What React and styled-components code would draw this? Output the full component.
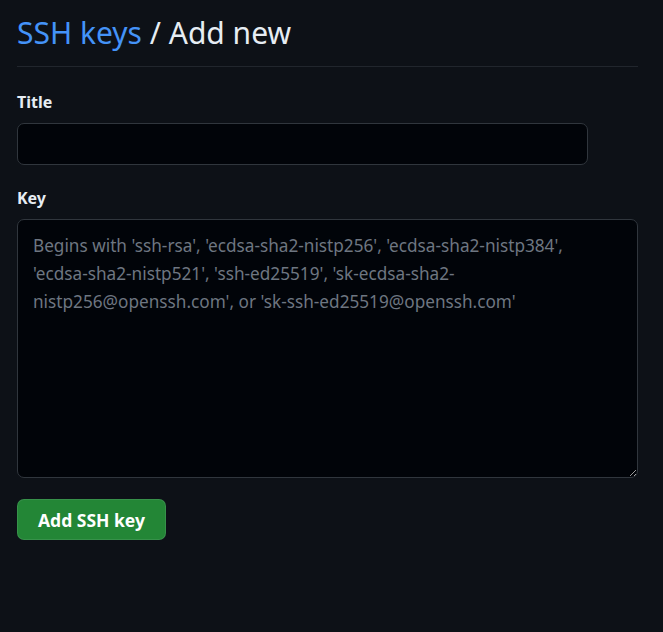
import styled, { createGlobalStyle } from "styled-components";

const GlobalStyle = createGlobalStyle`
  html, body {
    margin: 0;
    padding: 0;
    background-color: #0d1117;
    color-scheme: dark;
  }
  body {
    font-family: "Noto Sans", "Open Sans", sans-serif;
    color: #e6edf3;
  }
`;

const Page = styled.main`
  display: flex;
  flex-direction: column;
  width: 621px;
  padding: 12px 25px 40px 17px;
`;

const Subhead = styled.div`
  display: flex;
  align-items: center;
  padding-bottom: 12px;
  border-bottom: 1px solid #21262d;
  margin-bottom: 24px;
`;

const Heading = styled.h1`
  margin: 0;
  font-size: 30px;
  font-weight: 400;
  line-height: 42px;
  color: #e6edf3;
`;

const Crumb = styled.a`
  color: #4493f8;
  text-decoration: none;
`;

const Form = styled.form`
  display: flex;
  flex-direction: column;
`;

const Field = styled.div`
  display: flex;
  flex-direction: column;
  margin-bottom: ${(p) => p.$gap || 24}px;
`;

const Label = styled.label`
  font-size: 16px;
  font-weight: 700;
  line-height: 22px;
  margin-bottom: 10px;
  color: #e6edf3;
`;

const Input = styled.input`
  box-sizing: border-box;
  width: 571px;
  height: 42px;
  padding: 0 15px;
  font: inherit;
  font-size: 17.5px;
  color: #e6edf3;
  background-color: #010409;
  border: 1px solid #30363d;
  border-radius: 7px;
  outline: none;
`;

const KeyArea = styled.textarea`
  box-sizing: border-box;
  width: 621px;
  height: 259px;
  padding: 12px 15px;
  font: inherit;
  font-size: 17.2px;
  line-height: 28px;
  color: #e6edf3;
  background-color: #010409;
  border: 1px solid #30363d;
  border-radius: 7px;
  outline: none;
  resize: vertical;

  &::placeholder {
    color: #6e7681;
  }
`;

const SubmitButton = styled.button`
  height: 41px;
  padding: 0 20px;
  font: inherit;
  font-size: 17.5px;
  font-weight: 700;
  color: #ffffff;
  background-color: #238636;
  border: 1px solid rgba(240, 246, 252, 0.1);
  border-radius: 7px;
  cursor: pointer;
`;

const keyHint = [
  "Begins with 'ssh-rsa', 'ecdsa-sha2-nistp256', 'ecdsa-sha2-nistp384',",
  "'ecdsa-sha2-nistp521', 'ssh-ed25519', 'sk-ecdsa-sha2-",
  "nistp256@openssh.com', or 'sk-ssh-ed25519@openssh.com'",
].join("\n");

export default function App() {
  return (
    <>
      <GlobalStyle />
      <Page>
        <Subhead>
          <Heading>
            <Crumb href="#">SSH keys</Crumb> / Add new
          </Heading>
        </Subhead>
        <Form onSubmit={(e) => e.preventDefault()}>
          <Field $gap={22}>
            <Label htmlFor="ssh_key_title">Title</Label>
            <Input id="ssh_key_title" type="text" />
          </Field>
          <Field $gap={21}>
            <Label htmlFor="ssh_key_key">Key</Label>
            <KeyArea id="ssh_key_key" placeholder={keyHint} />
          </Field>
          <div>
            <SubmitButton type="submit">Add SSH key</SubmitButton>
          </div>
        </Form>
      </Page>
    </>
  );
}
